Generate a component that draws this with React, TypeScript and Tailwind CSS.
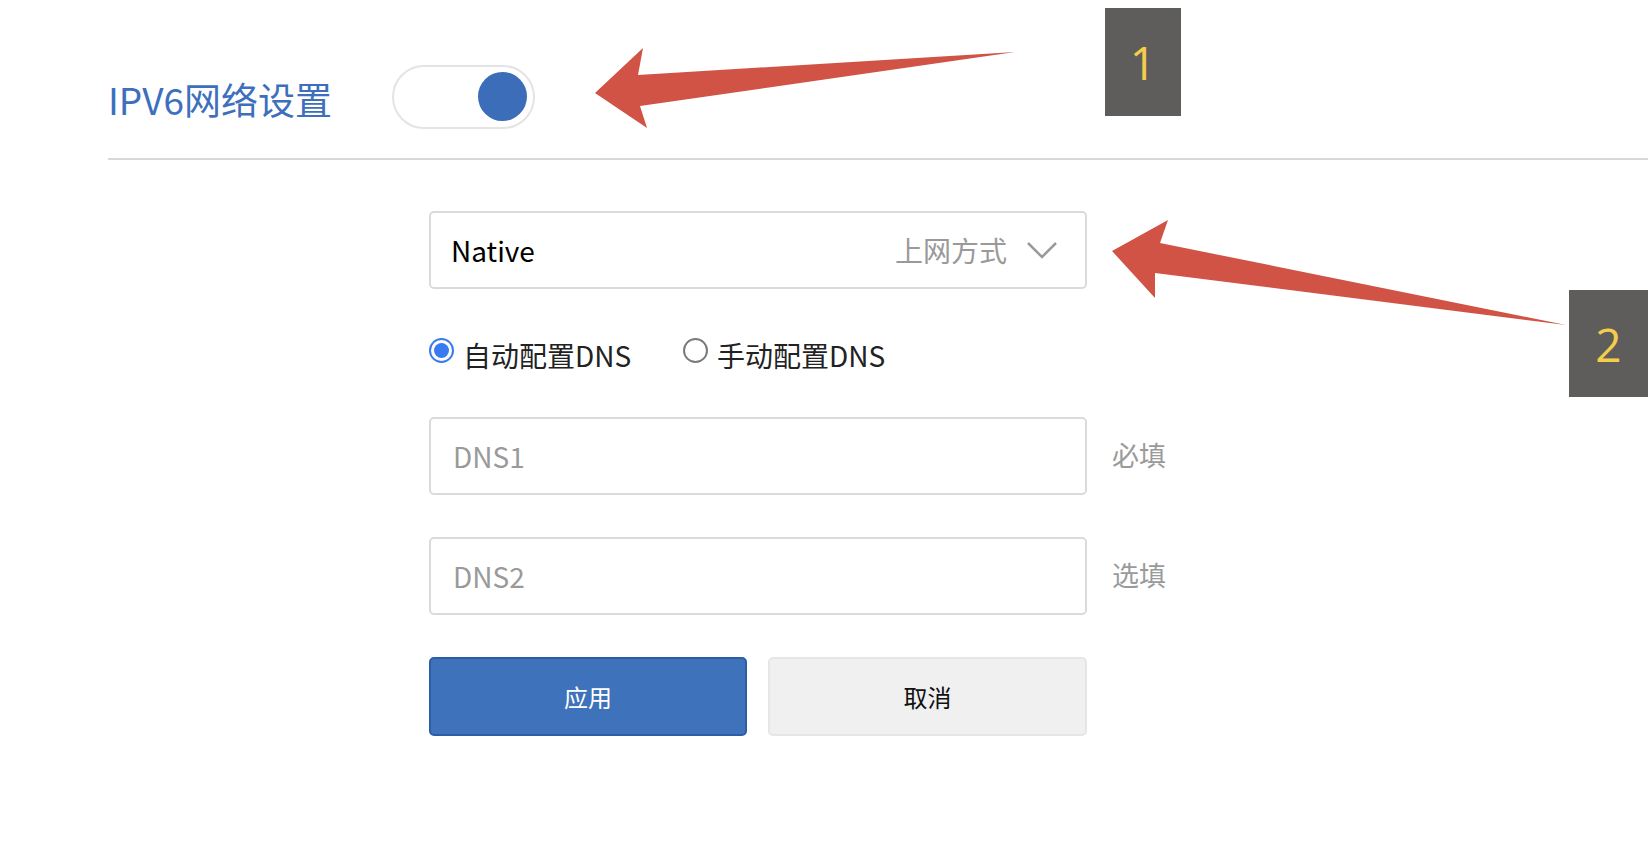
import React from "react";

const FONT = { fontFamily: '"Noto Sans CJK SC", "Noto Sans", sans-serif' };

function Radio({ checked, label }: { checked: boolean; label: string }) {
  return (
    <div className="flex items-center">
      {checked ? (
        <span className="w-[25px] h-[25px] rounded-full border-[2px] border-[#3a7af0] flex items-center justify-center -mt-[9px] bg-white">
          <span className="w-[15px] h-[15px] rounded-full bg-[#3a7af0]" />
        </span>
      ) : (
        <span className="w-[25px] h-[25px] rounded-full border-[2px] border-[#7a7a7a] -mt-[9px] bg-white" />
      )}
      <span className="ml-[9px] text-[28px] leading-[40px] text-[#222]">{label}</span>
    </div>
  );
}

export default function App() {
  return (
    <div className="relative w-[1648px] h-[854px] bg-white overflow-hidden" style={FONT}>
      {/* header */}
      <div className="flex pl-[108px] pt-[65px] h-[158px] items-start">
        <div className="flex items-center h-[63px]">
          <span className="text-[37px] leading-[44px] text-[#3d6fbd] mt-[4px]">IPV6网络设置</span>
          <div className="ml-[60px] w-[143px] h-[64px] rounded-full border-[2px] border-[#e4e4e4] bg-white flex items-center justify-end pr-[6px]">
            <div className="w-[49px] h-[49px] rounded-full bg-[#3c6db8]" />
          </div>
        </div>
      </div>
      <div className="ml-[108px] h-[2px] bg-[#d8d8d8]" />

      {/* form */}
      <div className="ml-[429px] mt-[51px] w-[658px] flex flex-col">
        <div className="h-[78px] rounded-[5px] border-[2px] border-[#dadada] flex items-center pl-[20px] pr-[28px]">
          <span className="text-[28px] leading-[36px] text-black">Native</span>
          <span className="ml-auto text-[28px] leading-[36px] text-[#9a9a9a]">上网方式</span>
          <svg className="ml-[20px]" width="30" height="18" viewBox="0 0 30 18">
            <polyline points="1,2 15,16 29,2" fill="none" stroke="#9a9a9a" strokeWidth="2.5" />
          </svg>
        </div>

        <div className="mt-[46px] h-[40px] flex items-center">
          <div className="w-[254px]">
            <Radio checked label="自动配置DNS" />
          </div>
          <Radio checked={false} label="手动配置DNS" />
        </div>

        <div className="mt-[42px] relative">
          <div className="h-[78px] rounded-[5px] border-[2px] border-[#dadada] flex items-center pl-[22px]">
            <span className="text-[28px] leading-[36px] text-[#9a9a9a]">DNS1</span>
          </div>
          <span className="absolute left-[683px] top-[20px] text-[27px] leading-[36px] text-[#9a9a9a] whitespace-nowrap">必填</span>
        </div>

        <div className="mt-[42px] relative">
          <div className="h-[78px] rounded-[5px] border-[2px] border-[#dadada] flex items-center pl-[22px]">
            <span className="text-[28px] leading-[36px] text-[#9a9a9a]">DNS2</span>
          </div>
          <span className="absolute left-[683px] top-[20px] text-[27px] leading-[36px] text-[#9a9a9a] whitespace-nowrap">选填</span>
        </div>

        <div className="mt-[42px] flex gap-[21px]">
          <button className="w-[318px] h-[79px] rounded-[5px] bg-[#3e72ba] border-[2px] border-[#2c5ea6] text-white text-[24px] leading-[32px]">
            应用
          </button>
          <button className="w-[319px] h-[79px] rounded-[5px] bg-[#f0f0f0] border-[2px] border-[#e6e6e6] text-[#111] text-[24px] leading-[32px]">
            取消
          </button>
        </div>
      </div>

      {/* annotations */}
      <svg className="absolute inset-0 pointer-events-none" width="1648" height="854" viewBox="0 0 1648 854">
        <polygon points="595,93 643,48 638,75 1015,52 640,106 647,128" fill="#d05345" />
        <polygon points="1112,251 1168,220 1160,243 1566,325 1155,273 1155,298" fill="#d05345" />
      </svg>
      <div className="absolute left-[1105px] top-[8px] w-[76px] h-[108px] bg-[#5e5d5b] flex items-center justify-center">
        <span className="text-[46px] leading-none text-[#f5cd4c]" style={{ fontFamily: '"Open Sans", sans-serif', fontWeight: 400 }}>1</span>
      </div>
      <div className="absolute left-[1569px] top-[290px] w-[79px] h-[107px] bg-[#5e5d5b] flex items-center justify-center">
        <span className="text-[46px] leading-none text-[#f5cd4c]" style={{ fontFamily: '"Open Sans", sans-serif', fontWeight: 400 }}>2</span>
      </div>
    </div>
  );
}
